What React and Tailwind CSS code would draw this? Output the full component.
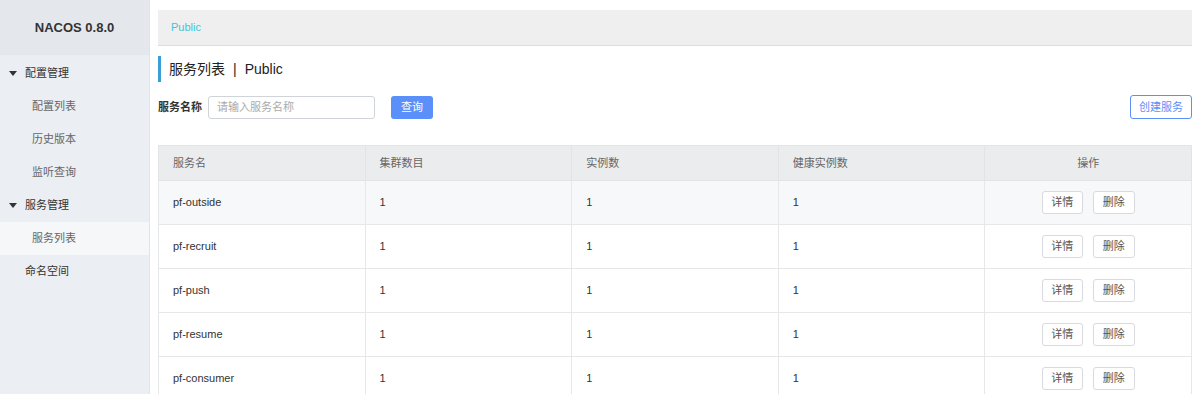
import { useState } from 'react'

const menu = [
  { label: '配置管理', group: true },
  { label: '配置列表' },
  { label: '历史版本' },
  { label: '监听查询' },
  { label: '服务管理', group: true },
  { label: '服务列表', active: true },
  { label: '命名空间', top: true },
]

const services = ['pf-outside', 'pf-recruit', 'pf-push', 'pf-resume', 'pf-consumer']

const font = { fontFamily: '"Liberation Sans", "Noto Sans CJK SC", sans-serif' }

export default function App() {
  const [name, setName] = useState('')

  return (
    <div className="flex h-[394px] w-[1200px] overflow-hidden bg-white text-[#333]" style={font}>
      {/* Sidebar */}
      <div className="w-[150px] shrink-0 bg-[#ebeef2] border-r border-[#e0e3e7] flex flex-col">
        <div className="h-[55px] bg-[#e4e7eb] flex items-center justify-center text-[13px] font-bold text-[#333]">
          NACOS 0.8.0
        </div>
        <div className="pt-[2px]">
          {menu.map((m) => (
            <div
              key={m.label}
              className={`h-[33px] flex items-center text-[11px] ${
                m.active ? 'bg-[#f6f7f8]' : ''
              } ${m.group ? 'pl-[9px] text-[#333]' : m.top ? 'pl-[25px] text-[#333]' : 'pl-[32px] text-[#666]'}`}
            >
              {m.group && (
                <svg width="8" height="6" viewBox="0 0 8 6" className="mr-[8px]">
                  <path d="M0 0 L8 0 L4 5 Z" fill="#333" />
                </svg>
              )}
              {m.label}
            </div>
          ))}
        </div>
      </div>

      {/* Main */}
      <div className="flex-1 pl-[8px] pr-[8px] pt-[10px]">
        <div className="h-[36px] bg-[#efefef] border-b border-[#dcdcdc] flex items-center pl-[13px] text-[11px] text-[#3ec5dc]">
          Public
        </div>

        <div className="mt-[10px] h-[26px] border-l-[3px] border-[#3a9fd8] flex items-center pl-[8px] text-[14px] text-[#222]">
          服务列表<span className="mx-[8px]">|</span>Public
        </div>

        <div className="mt-[13px] flex items-center h-[24px]">
          <span className="text-[11px] font-bold text-[#333] w-[50px]">服务名称</span>
          <input
            value={name}
            onChange={(e) => setName(e.target.value)}
            placeholder="请输入服务名称"
            className="w-[167px] h-[23px] border border-[#d0d3d8] rounded-[3px] px-[8px] text-[11px] placeholder:text-[#aaa] outline-none"
            style={font}
          />
          <button className="ml-[16px] w-[42px] h-[23px] rounded-[3px] bg-[#5b8ff9] text-white text-[11px]">
            查询
          </button>
          <button className="ml-auto w-[62px] h-[24px] rounded-[3px] border border-[#5b8ff9] bg-white text-[#5b8ff9] text-[11px]">
            创建服务
          </button>
        </div>

        <table className="mt-[26px] w-full border-collapse table-fixed text-[11px]">
          <thead>
            <tr className="h-[35px] bg-[#ebecee] text-[#666]">
              {['服务名', '集群数目', '实例数', '健康实例数'].map((h) => (
                <th key={h} className="font-normal text-left pl-[14px] border border-[#e3e4e6]">
                  {h}
                </th>
              ))}
              <th className="font-normal text-center border border-[#e3e4e6]">操作</th>
            </tr>
          </thead>
          <tbody>
            {services.map((s, i) => (
              <tr key={s} className={`h-[44px] ${i === 0 ? 'bg-[#f7f8f9]' : 'bg-white'} text-[#333]`}>
                <td className="pl-[14px] border border-[#e6e7e9]">{s}</td>
                <td className="pl-[14px] border border-[#e6e7e9]">1</td>
                <td className="pl-[14px] border border-[#e6e7e9]">1</td>
                <td className="pl-[14px] border border-[#e6e7e9]">1</td>
                <td className="border border-[#e6e7e9]">
                  <div className="flex justify-center gap-[10px]">
                    <button className="w-[41px] h-[23px] border border-[#d8dadd] rounded-[3px] bg-white text-[#555] text-[11px]">
                      详情
                    </button>
                    <button className="w-[42px] h-[23px] border border-[#d8dadd] rounded-[3px] bg-white text-[#555] text-[11px]">
                      删除
                    </button>
                  </div>
                </td>
              </tr>
            ))}
          </tbody>
        </table>
      </div>
    </div>
  )
}
